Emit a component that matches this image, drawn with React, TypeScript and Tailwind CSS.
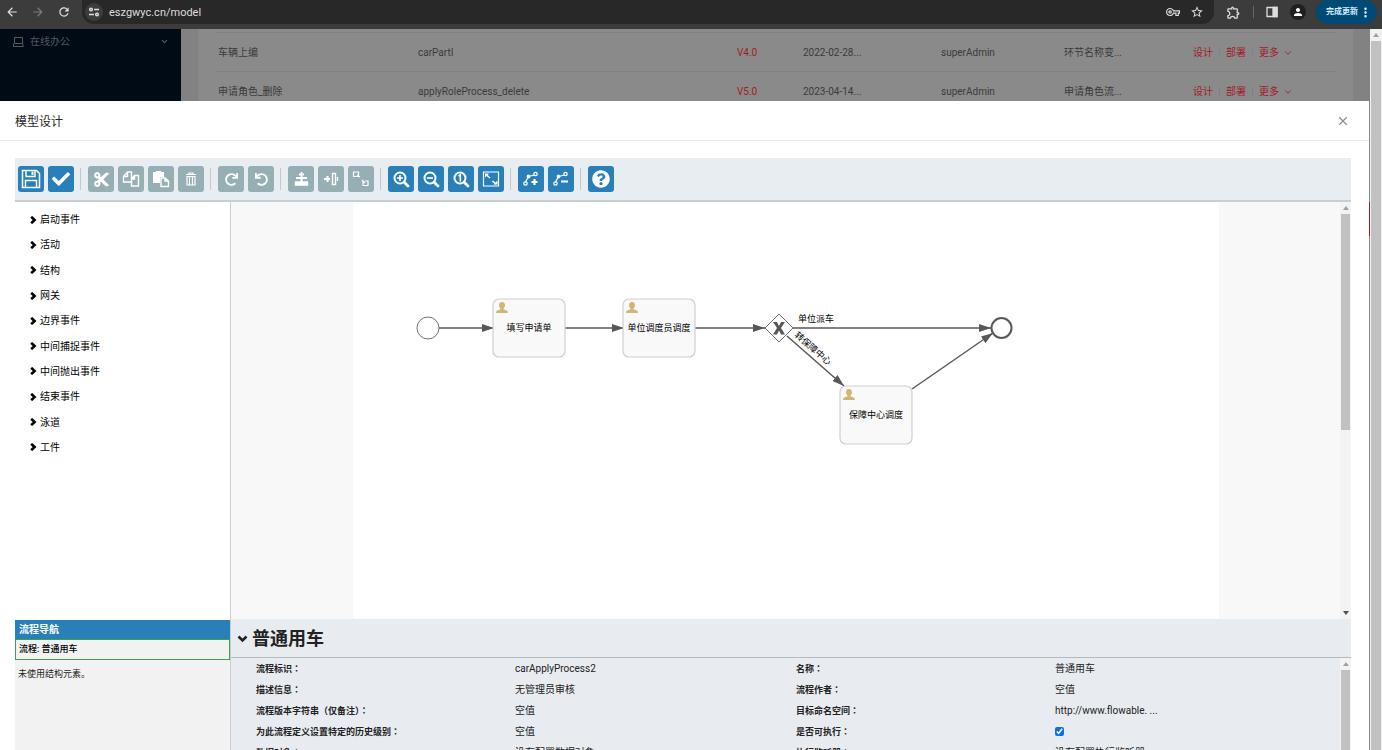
import React from 'react';
import { FaCheck, FaCut, FaQuestionCircle, FaRedo, FaUndo } from 'react-icons/fa';
import {
  MdArrowBack,
  MdArrowForward,
  MdMoreVert,
  MdOutlineExtension,
  MdOutlineVpnKey,
  MdPerson,
  MdRefresh,
  MdStarBorder,
} from 'react-icons/md';
import { ChevronDown, X } from 'lucide-react';

type IconProps = { children: React.ReactNode };

const ToolIcon = ({ children }: IconProps) => (
  <svg viewBox="0 0 20 20" className="size-5" fill="none" stroke="currentColor" strokeWidth="1.4" aria-hidden="true">
    {children}
  </svg>
);

const Lens = ({ children }: IconProps) => (
  <ToolIcon>
    <circle cx="9" cy="9" r="5.5" strokeWidth="2" />
    <path d="M13.2 13.2 17 17" strokeWidth="2.8" strokeLinecap="round" />
    {children}
  </ToolIcon>
);

const toolGroups = [
  [
    {
      name: '保存模型',
      active: true,
      icon: (
        <ToolIcon>
          <path d="M1.5 1.5h14l3 3v14h-17z" strokeWidth="1.5" />
          <path d="M5 2v5.5h9V2M4.5 18v-6.5h11V18" />
          <path d="M10.5 2.5h2v3.5h-2z" fill="currentColor" stroke="none" />
        </ToolIcon>
      ),
    },
    { name: '验证模型', active: true, icon: <FaCheck className="size-[18px]" /> },
  ],
  [
    { name: '剪切', active: false, icon: <FaCut className="size-[17px]" /> },
    {
      name: '复制',
      active: false,
      icon: (
        <ToolIcon>
          <path d="M2.5 7.5 6.5 3h4v10h-8zM6.5 3v4.5h-4" />
          <path d="M10.5 10 13.5 6.5h4V17h-7v-4M13.5 6.5V10h-3" />
        </ToolIcon>
      ),
    },
    {
      name: '粘贴',
      active: false,
      icon: (
        <ToolIcon>
          <path d="M2 3h3V2h5v1h3v5h-4v6H2z" fill="currentColor" stroke="none" />
          <path d="M10 9h4l3.5 3v5.5H10zM14 9v3h3.5" />
        </ToolIcon>
      ),
    },
    {
      name: '删除',
      active: false,
      icon: (
        <ToolIcon>
          <path d="M5 5.5h10M8 5.5V4h4v1.5M6 7.5V16h8V7.5zM8.5 8v8M11.5 8v8" strokeWidth="1.2" />
        </ToolIcon>
      ),
    },
  ],
  [
    { name: '重做', active: false, icon: <FaRedo className="size-[13px]" /> },
    { name: '撤销', active: false, icon: <FaUndo className="size-[13px]" /> },
  ],
  [
    {
      name: '垂直对齐',
      active: false,
      icon: (
        <ToolIcon>
          <path d="M10.5 3v6M8 5.5h5" strokeWidth="1.8" />
          <path d="M5 9h11M10.5 9v4" strokeWidth="2.2" />
          <path d="M4.5 13h12v3h-12z" fill="currentColor" />
        </ToolIcon>
      ),
    },
    {
      name: '水平对齐',
      active: false,
      icon: (
        <ToolIcon>
          <path d="M3 10h6M6.5 7v6" strokeWidth="2.2" />
          <path d="M11.5 4.5h3v11h-3z" />
          <path d="M16.5 8v4" />
        </ToolIcon>
      ),
    },
    {
      name: '同样大小',
      active: false,
      icon: (
        <ToolIcon>
          <path d="M2.5 3h5v4.5h-5zM6 6l3 2" strokeWidth="1.2" />
          <path d="M12 12.5v4h5v-4.5h-3M11 11l3 3" strokeWidth="1.2" />
        </ToolIcon>
      ),
    },
  ],
  [
    {
      name: '放大',
      active: true,
      icon: (
        <Lens>
          <path d="M9 6v6M6 9h6" strokeWidth="1.6" />
        </Lens>
      ),
    },
    {
      name: '缩小',
      active: true,
      icon: (
        <Lens>
          <path d="M6 9h6" strokeWidth="1.6" />
        </Lens>
      ),
    },
    {
      name: '实际大小',
      active: true,
      icon: (
        <Lens>
          <path d="M7.5 7.2 9.3 6v6.5" strokeWidth="1.6" />
        </Lens>
      ),
    },
    {
      name: '适合屏幕',
      active: true,
      icon: (
        <ToolIcon>
          <path d="M2.5 3h15v14h-15z" strokeWidth="1.2" />
          <path d="M5.5 6 9 9M11.5 12l3.5 3" strokeWidth="1.6" />
          <path d="M4 4.5h4l-4 4zM16.5 15.5h-4l4-4z" fill="currentColor" stroke="none" />
        </ToolIcon>
      ),
    },
  ],
  [
    {
      name: '添加拐点',
      active: true,
      icon: (
        <ToolIcon>
          <path d="M4.5 13 7.5 7.500l6-1.500" strokeWidth="1.2" />
          <circle cx="4.5" cy="14.5" r="1.7" strokeWidth="1.2" />
          <circle cx="14.5" cy="5" r="1.7" strokeWidth="1.2" />
          <circle cx="7.5" cy="7.5" r="1.2" fill="currentColor" />
          <path d="M13.5 10v6M10.5 13h6" strokeWidth="2.2" />
        </ToolIcon>
      ),
    },
    {
      name: '移除拐点',
      active: true,
      icon: (
        <ToolIcon>
          <path d="M4.5 13 7.5 7.500l6-1.500" strokeWidth="1.2" />
          <circle cx="4.5" cy="14.5" r="1.7" strokeWidth="1.2" />
          <circle cx="14.5" cy="5" r="1.7" strokeWidth="1.2" />
          <circle cx="7.5" cy="7.5" r="1.2" fill="currentColor" />
          <path d="M10 12.5h7" strokeWidth="2" />
        </ToolIcon>
      ),
    },
  ],
  [{ name: '帮助', active: true, icon: <FaQuestionCircle className="size-[18px]" /> }],
];

const models = [
  { name: '车辆上编', modelKey: 'carPartI', version: 'V4.0', date: '2022-02-28...', author: 'superAdmin', note: '环节名称变...' },
  {
    name: '申请角色_删除',
    modelKey: 'applyRoleProcess_delete',
    version: 'V5.0',
    date: '2023-04-14...',
    author: 'superAdmin',
    note: '申请角色流...',
  },
];

const palette = ['启动事件', '活动', '结构', '网关', '边界事件', '中间捕捉事件', '中间抛出事件', '结束事件', '泳道', '工件'];

const properties = [
  { label: '流程标识', value: 'carApplyProcess2' },
  { label: '名称', value: '普通用车' },
  { label: '描述信息', value: '无管理员审核' },
  { label: '流程作者', value: '空值' },
  { label: '流程版本字符串（仅备注）', value: '空值' },
  { label: '目标命名空间', value: 'http://www.flowable. ...' },
  { label: '为此流程定义设置特定的历史级别', value: '空值' },
  { label: '是否可执行', checked: true },
  { label: '数据对象', value: '没有配置数据对象' },
  { label: '执行监听器', value: '没有配置执行监听器' },
];

const tasks = [
  { x: 140, y: 97, label: '填写申请单' },
  { x: 270, y: 97, label: '单位调度员调度' },
  { x: 487, y: 184, label: '保障中心调度' },
];

const flows = [
  'M86 126H141',
  'M212 126H271',
  'M342 126H412',
  'M440 126H638',
  'M434 134 491 184',
  'M559 187 640 131',
];

const BrowserBar = () => (
  <header className="flex h-[29px] shrink-0 items-start bg-[#3c3c3c] text-[#dedede]">
    <div className="flex h-6 w-[82px] shrink-0 items-center gap-3 pl-[5px]">
      <button aria-label="后退">
        <MdArrowBack className="size-[14px]" />
      </button>
      <button aria-label="前进" className="text-[#7d7d7d]">
        <MdArrowForward className="size-[14px]" />
      </button>
      <button aria-label="刷新">
        <MdRefresh className="size-[14px]" />
      </button>
    </div>
    <div className="flex h-6 flex-1 items-center gap-1.5 rounded-b-xl bg-[#282828] pl-[3px] pr-2.5">
      <button aria-label="网站信息" className="flex size-[18px] items-center justify-center rounded-full bg-[#3c3c3c]">
        <svg viewBox="0 0 12 12" className="size-3" fill="none" stroke="currentColor" strokeWidth="1.5">
          <circle cx="3" cy="3.5" r="1.3" />
          <path d="M6 3.5h5M1 8.5h5" />
          <circle cx="9" cy="8.5" r="1.3" />
        </svg>
      </button>
      <input
        aria-label="地址"
        defaultValue="eszgwyc.cn/model"
        className="h-5 min-w-0 flex-1 bg-transparent text-[11px] outline-none"
      />
      <MdOutlineVpnKey className="size-[14px]" />
      <button aria-label="收藏" className="ml-1">
        <MdStarBorder className="size-[14px]" />
      </button>
    </div>
    <div className="flex h-6 shrink-0 items-center pl-3">
      <MdOutlineExtension className="size-[15px]" />
      <span className="ml-3 h-3 w-px bg-[#666]" />
      <svg viewBox="0 0 12 12" className="ml-3 size-3" fill="none" stroke="currentColor" strokeWidth="1.3">
        <path d="M1 1.5h10v9H1z" />
        <path d="M7 1.5h4v9H7z" fill="currentColor" />
      </svg>
      <span className="ml-3 flex size-4 items-center justify-center rounded-full bg-[#202020] text-white">
        <MdPerson className="size-3" />
      </span>
      <button className="ml-2.5 mr-[5px] flex h-6 items-center rounded-full bg-[#004a77] pl-2.5 pr-1 text-[8px] font-bold text-[#d3ecff]">
        完成更新
        <MdMoreVert className="size-[15px]" />
      </button>
    </div>
  </header>
);

const ModelList = () => (
  <div className="flex h-[72px] shrink-0 overflow-hidden bg-[#828282]">
    <aside className="w-[181px] shrink-0 bg-[#000b16] text-[#525a62]">
      <button className="flex h-[25px] w-full items-center pl-3 pr-3 text-[10px]">
        <svg viewBox="0 0 12 12" className="size-3" fill="none" stroke="currentColor">
          <path d="M2.5 1.5h8v6h-8zM1 10.5h10.5M1.5 7.5v3M11 7.5v3" />
        </svg>
        <span className="ml-1.5 flex-1 text-left">在线办公</span>
        <ChevronDown className="size-[9px]" strokeWidth={3} />
      </button>
    </aside>
    <main className="ml-[17px] mr-[17px] flex-1 bg-[#8a8a8a] pl-[18px] pr-4 pt-[3px]">
      <table className="w-full table-fixed text-left text-[10px] text-[#3a3a3a]">
        <colgroup>
          <col className="w-[200px]" />
          <col className="w-[319px]" />
          <col className="w-[66px]" />
          <col className="w-[138px]" />
          <col className="w-[123px]" />
          <col className="w-[129px]" />
          <col />
        </colgroup>
        <tbody>
          {models.map((model) => (
            <tr key={model.modelKey} className="h-[39px] border-t border-[#828282]">
              <td className="px-0.5 pt-px">{model.name}</td>
              <td className="px-0.5 pt-px">{model.modelKey}</td>
              <td className="px-0.5 pt-px text-[#a31a28]">{model.version}</td>
              <td className="px-0.5 pt-px">{model.date}</td>
              <td className="px-0.5 pt-px">{model.author}</td>
              <td className="px-0.5 pt-px">{model.note}</td>
              <td className="px-0.5 pt-px text-[#a31a28]">
                <div className="flex items-center gap-1.5">
                  <button>设计</button>
                  <span className="h-2 w-px bg-[#808080]" />
                  <button>部署</button>
                  <span className="h-2 w-px bg-[#808080]" />
                  <button className="flex items-center gap-1">
                    更多
                    <ChevronDown className="size-[10px]" strokeWidth={2} />
                  </button>
                </div>
              </td>
            </tr>
          ))}
        </tbody>
      </table>
    </main>
  </div>
);

const Toolbar = () => (
  <div className="flex h-11 shrink-0 items-center border-b-2 border-[#c9ced2] bg-[#e8edf1] pl-[3px]">
    {toolGroups.map((group, index) => (
      <div key={index} className="flex items-center">
        {index > 0 && <span className="ml-1.5 mr-[7px] h-[22px] w-px bg-[#c3c8cc]" />}
        <div className="flex gap-1">
          {group.map((tool) => (
            <button
              key={tool.name}
              aria-label={tool.name}
              className={`flex size-[26px] items-center justify-center rounded-[3px] text-white ${
                tool.active ? 'bg-[#2980b9]' : 'bg-[#95afb4]'
              }`}
            >
              {tool.icon}
            </button>
          ))}
        </div>
      </div>
    ))}
  </div>
);

const ProcessDiagram = () => (
  <svg
    viewBox="0 0 866 418"
    className="h-[418px] w-[866px] shrink-0 bg-white text-[9px]"
    fill="none"
    role="img"
    aria-label="普通用车流程图"
  >
    <defs>
      <marker id="arrow" markerUnits="userSpaceOnUse" markerWidth="12" markerHeight="8" refX="12" refY="4" orient="auto">
        <path d="M0 0 12 4 0 8z" fill="#585858" />
      </marker>
    </defs>
    {flows.map((flow) => (
      <path key={flow} d={flow} stroke="#585858" strokeWidth="1.5" markerEnd="url(#arrow)" />
    ))}
    <circle cx="75" cy="126" r="11" fill="white" stroke="#707070" />
    <circle cx="648.5" cy="126" r="10" fill="white" stroke="#585858" strokeWidth="2" />
    <path d="M426 112 440 126 426 140 412 126z" fill="white" stroke="#707070" />
    <path d="M420 120h4l2 4 2-4h4l-4 6 4 6.5h-4l-2-4-2 4h-4l4-6.5z" fill="#585858" />
    {tasks.map((task) => (
      <g key={task.label}>
        <rect x={task.x} y={task.y} width="72" height="58" rx="6" fill="#f9f9f9" stroke="#cfcfcf" strokeWidth="1.2" />
        <path
          transform={`translate(${task.x + 3} ${task.y + 3})`}
          d="M6 0c2 0 3 1.3 3 3.2 0 1.3-.6 2.400-1.300 3.100v1.200l3 1c.8.300 1.100 1 1.100 2.500H.2c0-1.500.3-2.200 1.100-2.500l3-1V6.300C3.600 5.600 3 4.500 3 3.200 3 1.300 4 0 6 0z"
          fill="#d1b575"
        />
        <text x={task.x + 36} y={task.y + 32} textAnchor="middle" fill="black">
          {task.label}
        </text>
      </g>
    ))}
    <text x="445" y="120" fill="black">
      单位派车
    </text>
    <text transform="translate(441 134) rotate(41)" fill="black">
      转保障中心
    </text>
  </svg>
);

const ScrollTrack = ({ thumb, end }: { thumb: string; end?: boolean }) => (
  <div className="flex w-[11px] shrink-0 flex-col items-center bg-[#f3f3f3]" aria-hidden="true">
    <span className="flex h-3 shrink-0 items-center justify-center">
      <svg viewBox="0 0 6 4" className="h-1 w-1.5">
        <path d="M0 4 3 0 6 4z" fill="#a0a0a0" />
      </svg>
    </span>
    <span className={`w-[9px] bg-[#c1c1c1] ${thumb}`} />
    {end && (
      <span className="mt-auto flex h-3 items-center justify-center">
        <svg viewBox="0 0 6 4" className="h-1 w-1.5">
          <path d="M0 0 3 4 6 0z" fill="#505050" />
        </svg>
      </span>
    )}
  </div>
);

const Palette = () => (
  <nav className="grid h-[258px] grid-rows-10 pl-[15px] pt-[5px] text-[10px] text-black">
    {palette.map((item) => (
      <button key={item} className="flex items-center gap-[3px] text-left">
        <svg viewBox="0 0 7 8" className="h-2 w-[7px]" fill="none" stroke="currentColor" strokeWidth="2.6">
          <path d="M1.2.8 4.6 4 1.2 7.2" />
        </svg>
        {item}
      </button>
    ))}
  </nav>
);

const Navigator = () => (
  <section className="h-[130px] bg-[#f2f2f2] text-[9px] text-[#222]">
    <h3 className="flex h-[19px] items-center bg-[#2980b9] pl-1 text-[10px] font-bold text-white">流程导航</h3>
    <div className="flex h-[21px] items-center border border-[#3fa04c] pl-[3px] font-medium text-black">流程: 普通用车</div>
    <p className="pl-[3px] pt-2 leading-3">未使用结构元素。</p>
  </section>
);

const PropertyPanel = () => (
  <section className="flex h-[131px] shrink-0 flex-col bg-[#e8ecf1] text-[#222]">
    <h2 className="flex h-[39px] shrink-0 items-center gap-1 border-b border-[#b3bcbc] pl-1.5 pt-0.5 text-lg font-bold">
      <svg viewBox="0 0 11 8" className="h-2 w-[11px]" fill="none" stroke="currentColor" strokeWidth="2.6">
        <path d="M1.5 1.5 5.5 5.5 9.5 1.5" />
      </svg>
      普通用车
    </h2>
    <div className="flex min-h-0 flex-1">
      <div className="grid flex-1 auto-rows-[21px] grid-cols-2 overflow-hidden pl-[25px] pr-1">
        {properties.map((property, index) => (
          <div key={property.label} className="flex items-center">
            <label htmlFor={`property-${index}`} className="w-[259px] shrink-0 pt-0.5 text-[9px] font-bold">
              {property.label}
              <span className="font-['Noto_Sans_CJK_TC',sans-serif]">：</span>
            </label>
            {property.checked ? (
              <input id={`property-${index}`} type="checkbox" defaultChecked className="size-[9px] accent-[#0d6fe8]" />
            ) : (
              <output id={`property-${index}`} className="text-[10px]">
                {property.value}
              </output>
            )}
          </div>
        ))}
      </div>
      <ScrollTrack thumb="flex-1" />
    </div>
  </section>
);

const ModelDesigner = () => (
  <section className="relative mr-px flex min-h-0 flex-1 flex-col bg-white">
    <span className="absolute -right-px top-[101px] h-[34px] w-px bg-[#8e1c25]" />
    <header className="flex h-10 shrink-0 items-center justify-between border-b border-[#e8e8e8] pl-[15px] pr-[19px]">
      <h1 className="pt-0.5 text-xs text-[#262626]">模型设计</h1>
      <button aria-label="关闭" className="text-[#8c8c8c]">
        <X className="size-[14px]" strokeWidth={2} />
      </button>
    </header>
    <div className="flex min-h-0 flex-1 flex-col pl-[15px] pr-[18px] pt-[17px]">
      <Toolbar />
      <div className="flex min-h-0 flex-1">
        <div className="flex w-[216px] shrink-0 flex-col justify-between border-r border-[#c9ced2]">
          <Palette />
          <Navigator />
        </div>
        <div className="flex min-w-0 flex-1 flex-col">
          <div className="flex min-h-0 flex-1 bg-[#f8f8f8]">
            <div className="flex min-w-0 flex-1 justify-center overflow-hidden">
              <ProcessDiagram />
            </div>
            <ScrollTrack thumb="h-[216px]" end />
          </div>
          <PropertyPanel />
        </div>
      </div>
    </div>
  </section>
);

const App = () => (
  <div className="flex h-screen flex-col overflow-hidden font-['Roboto','Noto_Sans_CJK_SC',sans-serif]">
    <BrowserBar />
    <div className="flex min-h-0 flex-1">
      <div className="flex min-w-0 flex-1 flex-col bg-[#8a8a8a]">
        <ModelList />
        <ModelDesigner />
      </div>
      <div className="flex w-3 shrink-0 flex-col items-center bg-[#f1f1f1]" aria-hidden="true">
        <span className="flex h-3 shrink-0 items-center">
          <svg viewBox="0 0 6 4" className="h-1 w-1.5">
            <path d="M0 4 3 0 6 4z" fill="#a0a0a0" />
          </svg>
        </span>
        <span className="w-2.5 flex-1 bg-[#c1c1c1]" />
      </div>
    </div>
  </div>
);

export default App;
